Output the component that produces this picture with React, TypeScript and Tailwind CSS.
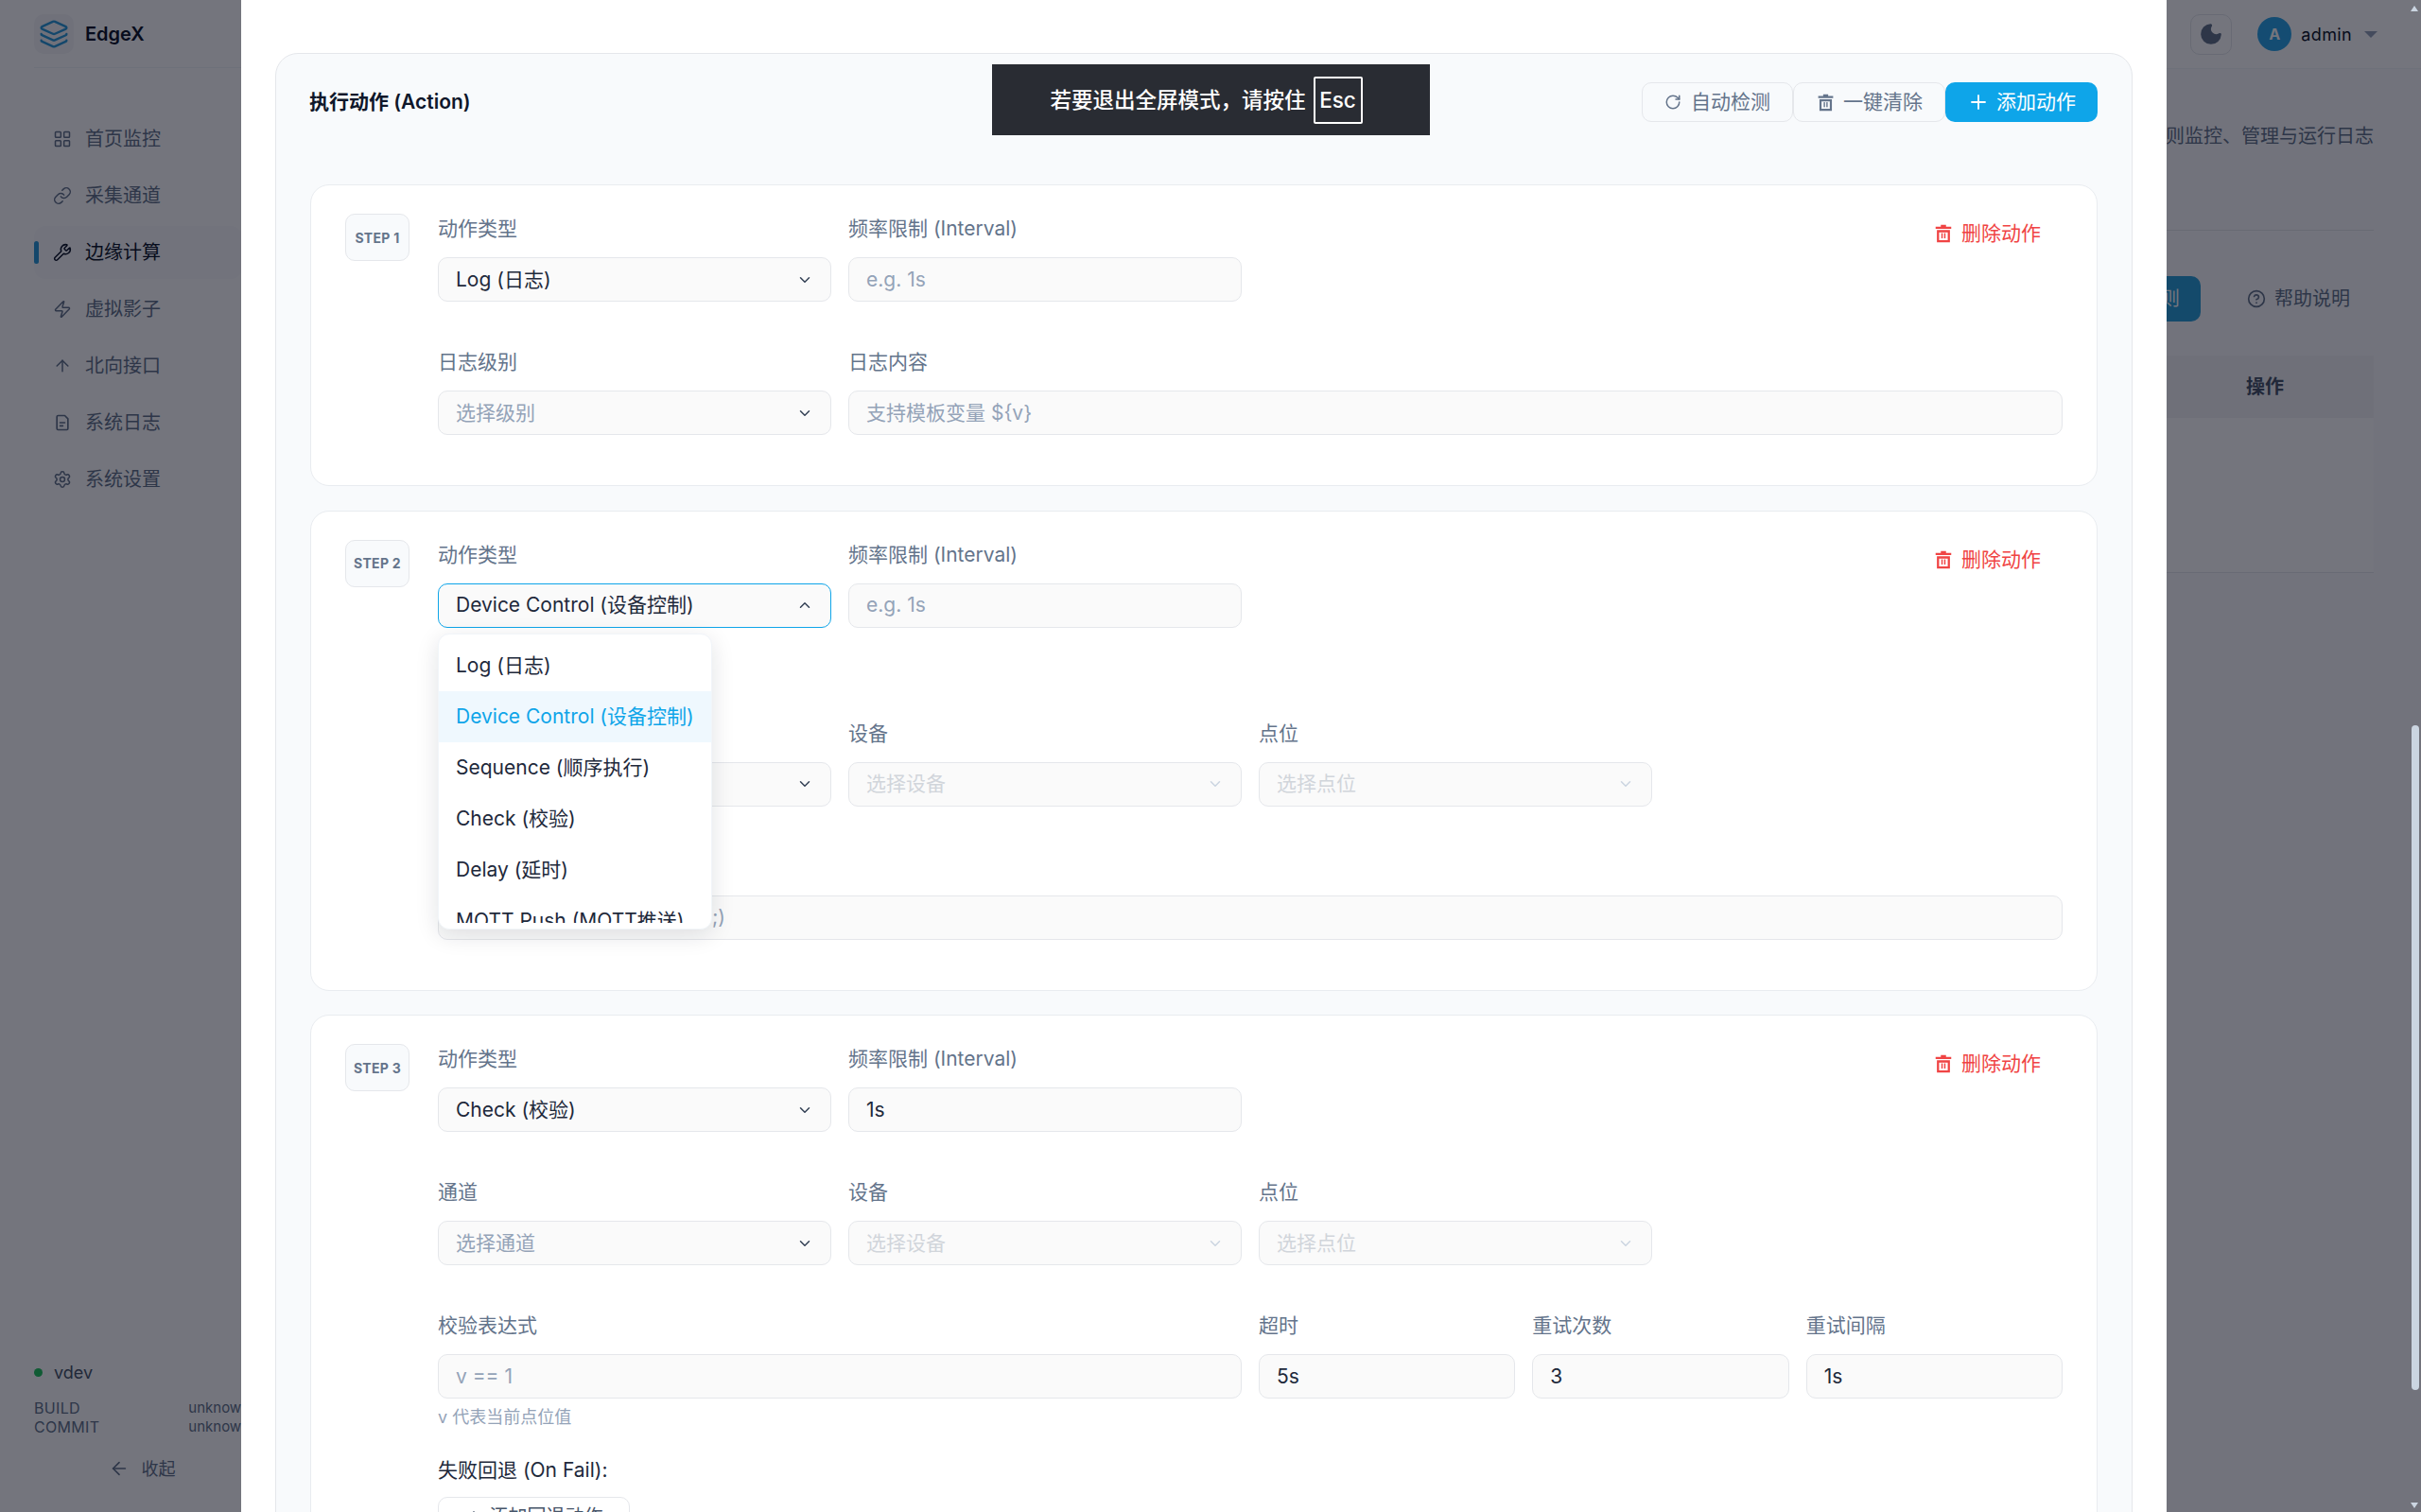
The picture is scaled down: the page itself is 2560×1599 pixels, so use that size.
import React from 'react';
import {
  ArrowLeft, ArrowUp, ChevronDown, ChevronUp, CircleHelp, LayoutGrid, Layers, Link, Moon, Plus, RotateCw, Settings, Wrench, Zap,
} from 'lucide-react';

const FONT = "font-['Inter','Noto_Sans_CJK_SC',sans-serif]";

const TrashIcon = ({ className }: { className?: string }) => (
  <svg viewBox="0 0 24 24" className={className} fill="currentColor">
    <path d="M9 2h6v2h6v2.500H3V4h6z" />
    <path fillRule="evenodd" d="M4.500 8h15v14h-15zM7 10.500v9h10v-9z" />
    <rect x="9.600" y="11.500" width="1.600" height="6" />
    <rect x="12.800" y="11.500" width="1.600" height="6" />
  </svg>
);

const DocIcon = ({ className }: { className?: string }) => (
  <svg viewBox="0 0 24 24" className={className} fill="none" stroke="currentColor" strokeWidth="2" strokeLinejoin="round" strokeLinecap="round">
    <path d="M5 4.500A1.500 1.500 0 0 1 6.500 3H15l4 4v12.500a1.500 1.500 0 0 1-1.500 1.500h-11A1.500 1.500 0 0 1 5 19.500z" />
    <path d="M9 12h6M9 16h3.500" />
  </svg>
);

const navItems = [
  { label: '首页监控', icon: LayoutGrid },
  { label: '采集通道', icon: Link },
  { label: '边缘计算', icon: Wrench, active: true },
  { label: '虚拟影子', icon: Zap },
  { label: '北向接口', icon: ArrowUp },
  { label: '系统日志', icon: DocIcon },
  { label: '系统设置', icon: Settings },
];

const options = ['Log (日志)', 'Device Control (设备控制)', 'Sequence (顺序执行)', 'Check (校验)', 'Delay (延时)', 'MQTT Push (MQTT推送)'];

const Label = ({ children }: { children: React.ReactNode }) => (
  <div className="mb-[14px] flex h-[32px] items-center text-[21px] text-[#64748b]">{children}</div>
);

const Select = ({ value, placeholder, disabled, open }: { value?: string; placeholder?: string; disabled?: boolean; open?: boolean }) => (
  <div className={`flex h-[47px] items-center justify-between rounded-[10px] border bg-[#fafafa] pl-[18px] pr-[18px] text-[21px] ${open ? 'border-[#0ea5e9]' : 'border-[#e5e7eb]'}`}>
    <span className={value ? 'text-[#1e293b]' : disabled ? 'text-[#d1d5db]' : 'text-[#94a3b8]'}>{value || placeholder}</span>
    {open ? (
      <ChevronUp className="h-[18px] w-[18px] text-[#334155]" />
    ) : (
      <ChevronDown className={`h-[18px] w-[18px] ${disabled ? 'text-[#cbd5e1]' : 'text-[#334155]'}`} />
    )}
  </div>
);

const Input = ({ value, placeholder }: { value?: string; placeholder?: string }) => (
  <div className="flex h-[47px] items-center rounded-[10px] border border-[#e5e7eb] bg-[#fafafa] px-[18px] text-[21px]">
    <span className={value ? 'text-[#1e293b]' : 'text-[#94a3b8]'}>{value || placeholder}</span>
  </div>
);

const Field = ({ span, label, children }: { span: string; label: string; children: React.ReactNode }) => (
  <div className={span}>
    <Label>{label}</Label>
    {children}
  </div>
);

const Dropdown = () => (
  <div className="absolute left-0 top-[53px] z-10 w-[290px] rounded-[12px] border border-[#f1f5f9] bg-white py-[6px] text-[21px] text-[#1e293b] shadow-[0_6px_24px_rgba(15,23,42,0.12)]">
    <div className="h-[299px] overflow-hidden">
      {options.map((o) => (
        <div
          key={o}
          className={`flex h-[54px] items-center whitespace-nowrap pl-[18px] ${o.startsWith('Device') ? 'bg-[#eff8fe] text-[#0ea5e9]' : ''}`}
        >
          {o}
        </div>
      ))}
    </div>
  </div>
);

const RowGrid = ({ children, className }: { children: React.ReactNode; className?: string }) => (
  <div className={`grid grid-cols-24 gap-x-[18px] ${className || ''}`}>{children}</div>
);

const DeleteAction = () => (
  <div className="col-span-12 flex justify-end pr-[23px]">
    <div className="flex h-[42px] items-center gap-[8px] text-[21px] text-[#f04444]">
      <TrashIcon className="h-[22px] w-[22px]" />
      删除动作
    </div>
  </div>
);

const StepCard = ({ step, children, last }: { step: number; children: React.ReactNode; last?: boolean }) => (
  <div className={`flex rounded-[20px] border border-[#e9ecf0] bg-white pl-[36px] pr-[36px] pt-[30px] ${last ? 'pb-[40px]' : 'pb-[53px]'}`}>
    <div className="mr-[30px] flex h-[50px] w-[68px] shrink-0 items-center justify-center rounded-[10px] border border-[#e5e7eb] bg-[#f8fafc] text-[14px] font-bold tracking-[0.02em] text-[#64748b]">
      STEP {step}
    </div>
    <div className="min-w-0 flex-1">{children}</div>
  </div>
);

const Page = () => (
  <div className="flex h-full text-[20px]">
    <aside className="flex w-[300px] shrink-0 flex-col overflow-hidden bg-white px-[36px]">
      <div className="flex h-[72px] shrink-0 items-center gap-[12px] border-b border-[#f1f5f9]">
        <div className="flex h-[42px] w-[42px] items-center justify-center rounded-[10px] bg-[#f6f7f9]">
          <Layers className="h-[32px] w-[32px] text-[#2b9ad8]" strokeWidth={1.8} />
        </div>
        <span className="text-[20px] font-semibold text-[#0f172a]">EdgeX</span>
      </div>
      <nav className="mt-[47px] flex flex-col gap-[4px] pr-[8px]">
        {navItems.map((it) => (
          <div
            key={it.label}
            className={`relative flex h-[56px] items-center gap-[14px] rounded-[12px] pl-[20px] ${it.active ? 'bg-[#fafbfc] text-[#0f172a]' : 'text-[#64748b]'}`}
          >
            {it.active && <span className="absolute left-0 top-[16px] h-[24px] w-[5px] rounded-full bg-[#2b9ad8]" />}
            <it.icon className="h-[20px] w-[20px]" strokeWidth={1.8} />
            {it.label}
          </div>
        ))}
      </nav>
      <div className="mt-auto pb-[26px]">
        <div className="mb-[16px] flex h-[24px] items-center gap-[12px] text-[18px] text-[#475569]">
          <span className="h-[9px] w-[9px] rounded-full bg-[#22c55e]" />
          vdev
        </div>
        <div className="flex h-[20px] items-center justify-between text-[16px] tracking-[0.02em] text-[#64748b]">
          <span>BUILD</span>
          <span className="text-[15px] tracking-normal">unknown</span>
        </div>
        <div className="flex h-[20px] items-center justify-between text-[16px] tracking-[0.02em] text-[#64748b]">
          <span>COMMIT</span>
          <span className="text-[15px] tracking-normal">unknown</span>
        </div>
        <div className="mt-[14px] flex h-[40px] items-center justify-center gap-[13px] text-[18px] text-[#64748b]">
          <ArrowLeft className="h-[22px] w-[22px]" strokeWidth={1.8} />
          收起
        </div>
      </div>
    </aside>
    <main className="flex min-w-0 flex-1 flex-col bg-[#fafbfc]">
      <header className="flex h-[73px] shrink-0 items-center justify-end border-b border-[#f1f5f9] bg-white pr-[48px]">
        <div className="mr-[27px] flex h-[43px] w-[44px] items-center justify-center rounded-[10px] border border-[#e5e7eb]">
          <Moon className="h-[26px] w-[26px] text-[#64748b]" fill="currentColor" />
        </div>
        <div className="mr-[10px] flex h-[36px] w-[36px] items-center justify-center rounded-full bg-[#2ba5e6] text-[16px] font-bold text-white">A</div>
        <span className="text-[18px] tracking-[0.02em] text-[#0f172a]">admin</span>
        <span className="ml-[13px] mr-[-2px] h-0 w-0 border-x-[7px] border-t-[7px] border-x-transparent border-t-[#94a3b8]" />
      </header>
      <div className="flex flex-1 flex-col pl-[24px] pr-[50px]">
        <div className="h-[171px] border-b border-[#e5e7eb] pt-[57px] text-right leading-[28px] text-[#64748b] whitespace-nowrap">
          规则监控、管理与运行日志
        </div>
        <div className="mt-[48px] flex h-[48px] items-center justify-end pr-[25px]">
          <div className="mr-[49px] flex h-[48px] items-center rounded-[10px] bg-[#2a9fd8] pl-[16px] pr-[22px] text-white">规则</div>
          <div className="flex items-center gap-[9px] text-[#64748b]">
            <CircleHelp className="h-[20px] w-[20px]" />
            帮助说明
          </div>
        </div>
        <div className="mt-[36px] h-[230px] border-b border-[#e5e7eb] bg-white">
          <div className="flex h-[66px] items-center justify-end bg-[#f3f4f6] pr-[95px] font-bold text-[#475569]">操作</div>
        </div>
      </div>
    </main>
  </div>
);

const Modal = () => (
  <div className="absolute left-[255px] top-0 h-full w-[2036px] overflow-hidden bg-white pl-[36px] pr-[36px] pt-[56px]">
    <div className="rounded-[24px] border border-[#e5e7eb] bg-[#f8fafc] pl-[36px] pr-[36px] pt-[30px]">
      <div className="mb-[66px] flex h-[42px] items-center justify-between">
        <div className="ml-[-1px] text-[21px] font-semibold text-[#0f172a]">执行动作 (Action)</div>
        <div className="flex text-[21px] text-[#64748b]">
          <div className="flex h-[42px] w-[160px] items-center justify-center gap-[10px] rounded-[10px] border border-[#e5e7eb] bg-[#f8fafc]">
            <RotateCw className="h-[18px] w-[18px]" />
            自动检测
          </div>
          <div className="flex h-[42px] w-[161px] items-center justify-center gap-[8px] rounded-[10px] border border-[#e5e7eb] bg-[#f8fafc]">
            <TrashIcon className="h-[21px] w-[21px]" />
            一键清除
          </div>
          <div className="flex h-[42px] w-[161px] items-center justify-center gap-[7px] rounded-[10px] bg-[#0ea5e9] text-white">
            <Plus className="h-[24px] w-[24px]" strokeWidth={1.8} />
            添加动作
          </div>
        </div>
      </div>
      <div className="flex flex-col gap-[25.5px]">
        <StepCard step={1}>
          <RowGrid className="mb-[48px]">
            <Field span="col-span-6" label="动作类型"><Select value="Log (日志)" /></Field>
            <Field span="col-span-6" label="频率限制 (Interval)"><Input placeholder="e.g. 1s" /></Field>
            <DeleteAction />
          </RowGrid>
          <RowGrid>
            <Field span="col-span-6" label="日志级别"><Select placeholder="选择级别" /></Field>
            <Field span="col-span-18" label="日志内容"><Input placeholder="支持模板变量 ${v}" /></Field>
          </RowGrid>
        </StepCard>
        <StepCard step={2}>
          <RowGrid className="mb-[96px]">
            <div className="relative col-span-6">
              <Label>动作类型</Label>
              <Select value="Device Control (设备控制)" open />
              <div className="absolute left-0 top-[46px] h-[47px] w-full">
                <Dropdown />
              </div>
            </div>
            <Field span="col-span-6" label="频率限制 (Interval)"><Input placeholder="e.g. 1s" /></Field>
            <DeleteAction />
          </RowGrid>
          <RowGrid className="mb-[48px]">
            <Field span="col-span-6" label="通道"><Select placeholder="选择通道" /></Field>
            <Field span="col-span-6" label="设备"><Select placeholder="选择设备" disabled /></Field>
            <Field span="col-span-6" label="点位"><Select placeholder="选择点位" disabled /></Field>
          </RowGrid>
          <RowGrid>
            <Field span="col-span-24" label="写入值"><Input placeholder="写入值，支持模板变量 (如: 1 ;)" /></Field>
          </RowGrid>
        </StepCard>
        <StepCard step={3} last>
          <RowGrid className="mb-[48px]">
            <Field span="col-span-6" label="动作类型"><Select value="Check (校验)" /></Field>
            <Field span="col-span-6" label="频率限制 (Interval)"><Input value="1s" /></Field>
            <DeleteAction />
          </RowGrid>
          <RowGrid className="mb-[48px]">
            <Field span="col-span-6" label="通道"><Select placeholder="选择通道" /></Field>
            <Field span="col-span-6" label="设备"><Select placeholder="选择设备" disabled /></Field>
            <Field span="col-span-6" label="点位"><Select placeholder="选择点位" disabled /></Field>
          </RowGrid>
          <RowGrid>
            <Field span="col-span-12" label="校验表达式">
              <Input placeholder="v == 1" />
              <div className="mt-[8px] h-[24px] text-[18px] leading-[24px] text-[#94a3b8]">v 代表当前点位值</div>
            </Field>
            <Field span="col-span-4" label="超时"><Input value="5s" /></Field>
            <Field span="col-span-4" label="重试次数"><Input value="3" /></Field>
            <Field span="col-span-4" label="重试间隔"><Input value="1s" /></Field>
          </RowGrid>
          <div className="mt-[30px] h-[28px] text-[21px] leading-[28px] text-[#1e293b]">失败回退 (On Fail):</div>
          <div className="mt-[14px] flex h-[42px] w-[203px] items-center justify-center gap-[8px] rounded-[10px] border border-[#e5e7eb] bg-white text-[20px] text-[#475569]">
            <Plus className="h-[18px] w-[18px]" />
            添加回退动作
          </div>
        </StepCard>
      </div>
    </div>
  </div>
);

export default function App() {
  return (
    <div className={`relative h-[1599px] w-[2560px] overflow-hidden ${FONT}`}>
      <Page />
      <div className="absolute inset-0 bg-[rgba(2,4,18,0.55)]" />
      <Modal />

      {/* browser fullscreen hint */}
      <div className="absolute left-[1049px] top-[68px] flex h-[75px] w-[463px] items-center justify-center gap-[8px] bg-[#292c33] pr-[10px] text-[22.5px] font-medium text-white">
        若要退出全屏模式，请按住
        <span className="flex h-[50px] w-[52px] items-center justify-center rounded-[2px] border-2 border-white">Esc</span>
      </div>

      {/* modal scrollbar */}
      <div className="absolute right-[2px] top-[767px] h-[703px] w-[8px] rounded-full bg-[#cbd5e1]" />
      <div className="absolute right-[3px] top-[6px] h-0 w-0 border-x-[4px] border-b-[6px] border-x-transparent border-b-[#cbd5e1]" />
      <div className="absolute bottom-[4px] right-[3px] h-0 w-0 border-x-[4px] border-t-[6px] border-x-transparent border-t-[#cbd5e1]" />
    </div>
  );
}
